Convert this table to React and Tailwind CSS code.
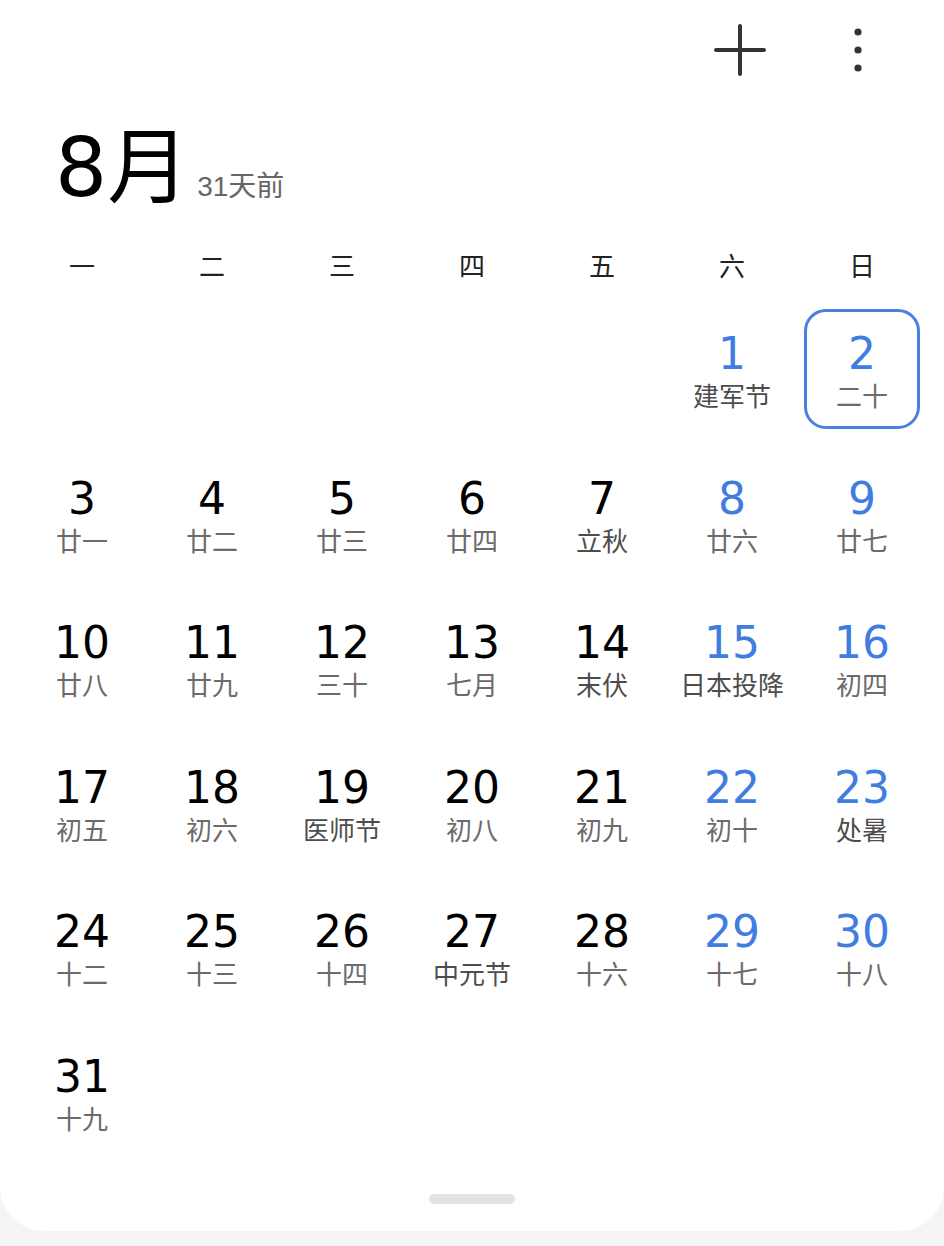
import React from "react";

const BLUE = "text-[#3f7de0]";

const days = [
  [1, "建军节", true],
  [2, "二十"],
  [3, "廿一"],
  [4, "廿二"],
  [5, "廿三"],
  [6, "廿四"],
  [7, "立秋", true],
  [8, "廿六"],
  [9, "廿七"],
  [10, "廿八"],
  [11, "廿九"],
  [12, "三十"],
  [13, "七月"],
  [14, "末伏", true],
  [15, "日本投降", true],
  [16, "初四"],
  [17, "初五"],
  [18, "初六"],
  [19, "医师节", true],
  [20, "初八"],
  [21, "初九"],
  [22, "初十"],
  [23, "处暑", true],
  [24, "十二"],
  [25, "十三"],
  [26, "十四"],
  [27, "中元节", true],
  [28, "十六"],
  [29, "十七"],
  [30, "十八"],
  [31, "十九"],
];

const weekdays = ["一", "二", "三", "四", "五", "六", "日"];

// August starts on Saturday (column 6)
const OFFSET = 5;

const DayCell = ({ day, lunar, special, col, selected }) => {
  const weekend = col >= 5;
  return (
    <div className="flex justify-center">
      <div
        className={`box-border flex flex-col items-center w-[116px] h-[120px] ${
          selected
            ? "border-[3px] border-[#4a80e0] rounded-[22px] pt-[20px]"
            : "pt-[23px]"
        }`}
      >
        <span
          className={`h-[44px] text-[44px] leading-none font-['DejaVu_Sans',sans-serif] ${
            weekend ? BLUE : "text-black"
          }`}
        >
          {day}
        </span>
        <span
          className={`mt-[6px] text-[26px] leading-none whitespace-nowrap font-['Noto_Sans_CJK_SC',sans-serif] ${
            special ? "text-[#4d4d4d]" : "text-[#6b6b6b]"
          }`}
        >
          {lunar}
        </span>
      </div>
    </div>
  );
};

export default function App() {
  const cells = [];
  for (let i = 0; i < OFFSET; i++) cells.push(<div key={`e${i}`} />);
  days.forEach(([d, l, s], i) => {
    const col = (i + OFFSET) % 7;
    cells.push(
      <DayCell
        key={d}
        day={d}
        lunar={l}
        special={s}
        col={col}
        selected={d === 2}
      />
    );
  });

  return (
    <div className="w-full h-[1246px] bg-[#f5f5f5]">
      <div className="h-[1231px] bg-white rounded-b-[44px] flex flex-col">
        {/* top bar */}
        <div className="h-[100px] flex items-center justify-end pr-[80px] gap-[86px]">
          <svg width="52" height="52" viewBox="0 0 52 52">
            <path
              d="M26 2 V50 M2 26 H50"
              stroke="#333"
              strokeWidth="4"
              strokeLinecap="round"
            />
          </svg>
          <svg width="12" height="52" viewBox="0 0 12 52">
            <circle cx="6" cy="8" r="3.6" fill="#333" />
            <circle cx="6" cy="26" r="3.6" fill="#333" />
            <circle cx="6" cy="44" r="3.6" fill="#333" />
          </svg>
        </div>

        {/* month title */}
        <div className="h-[120px] pl-[55px] pt-[27px] flex items-baseline">
          <span className="text-[82px] leading-none text-black font-['DejaVu_Sans','Noto_Sans_CJK_SC',sans-serif]">
            8月
          </span>
          <span className="ml-[8px] text-[28px] leading-none text-[#666] font-['Liberation_Sans','Noto_Sans_CJK_SC',sans-serif]">
            31天前
          </span>
        </div>

        {/* weekdays */}
        <div className="mt-[23px] mx-[17px] h-[44px] grid grid-cols-7 items-center">
          {weekdays.map((w) => (
            <span
              key={w}
              className="text-center text-[26px] leading-none text-[#222] font-['Noto_Sans_CJK_SC',sans-serif]"
            >
              {w}
            </span>
          ))}
        </div>

        {/* days */}
        <div className="mt-[22px] mx-[17px] grid grid-cols-7 gap-y-[24.5px]">
          {cells}
        </div>

        {/* handle */}
        <div className="mt-auto mb-[27px] mx-auto w-[86px] h-[10px] rounded-full bg-[#e3e3e3]" />
      </div>
    </div>
  );
}
